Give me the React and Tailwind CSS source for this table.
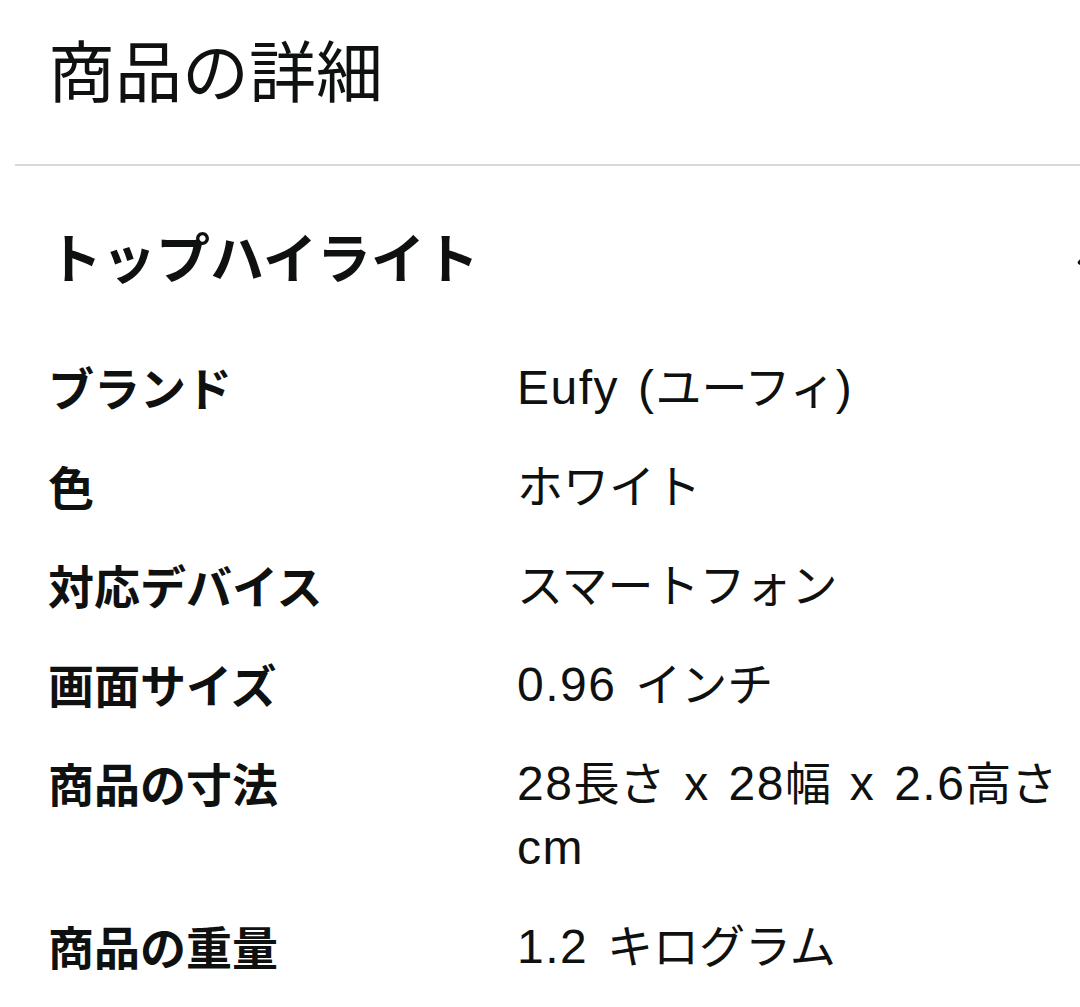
import React from "react";

const rows = [
  ["ブランド", "Eufy (ユーフィ)"],
  ["色", "ホワイト"],
  ["対応デバイス", "スマートフォン"],
  ["画面サイズ", "0.96 インチ"],
  ["商品の寸法", "28長さ x 28幅 x 2.6高さ cm"],
  ["商品の重量", "1.2 キログラム"],
];

function Value({ text }) {
  const parts = text.split(/([\x00-\x7F]+)/).filter((p) => p !== "");
  return parts.map((p, i) =>
    /^[\x00-\x7F]+$/.test(p) ? (
      <span key={i} className="text-[48px] leading-[64px] tracking-[1.5px] [word-spacing:4px]">
        {p}
      </span>
    ) : (
      <span key={i}>{p}</span>
    )
  );
}

export default function App() {
  return (
    <div
      className="w-[1080px] h-[1007px] overflow-hidden bg-white text-[#0f1111]"
      style={{ fontFamily: '"Noto Sans", "Noto Sans CJK JP", sans-serif' }}
    >
      <div className="pl-[48px] pt-[31px] h-[164px]">
        <h1 className="text-[67px] leading-[80px] font-normal">商品の詳細</h1>
      </div>
      <div className="ml-[15px] h-[2px] bg-[#d5d9d9]" />
      <div className="flex items-center justify-between pl-[48px] pt-[60px]">
        <h2 className="text-[54px] leading-[64px] font-bold">トップハイライト</h2>
        <svg
          className="mr-[-30px] w-[36px] h-[36px]"
          viewBox="0 0 24 24"
          fill="none"
          stroke="#0f1111"
          strokeWidth="3"
          strokeLinecap="round"
          strokeLinejoin="round"
        >
          <path d="M4 15l8-8 8 8" />
        </svg>
      </div>
      <div className="flex flex-col gap-[35px] pl-[48px] pt-[66px]">
        {rows.map(([k, v]) => (
          <div key={k} className="grid grid-cols-[469px_550px] leading-[64px]">
            <div className="font-bold text-[46px]">{k}</div>
            <div
              className="font-normal text-[46px] leading-[64px]"
              style={{ fontFamily: '"Liberation Sans", "Noto Sans CJK JP", sans-serif' }}
            >
              <Value text={v} />
            </div>
          </div>
        ))}
      </div>
    </div>
  );
}
